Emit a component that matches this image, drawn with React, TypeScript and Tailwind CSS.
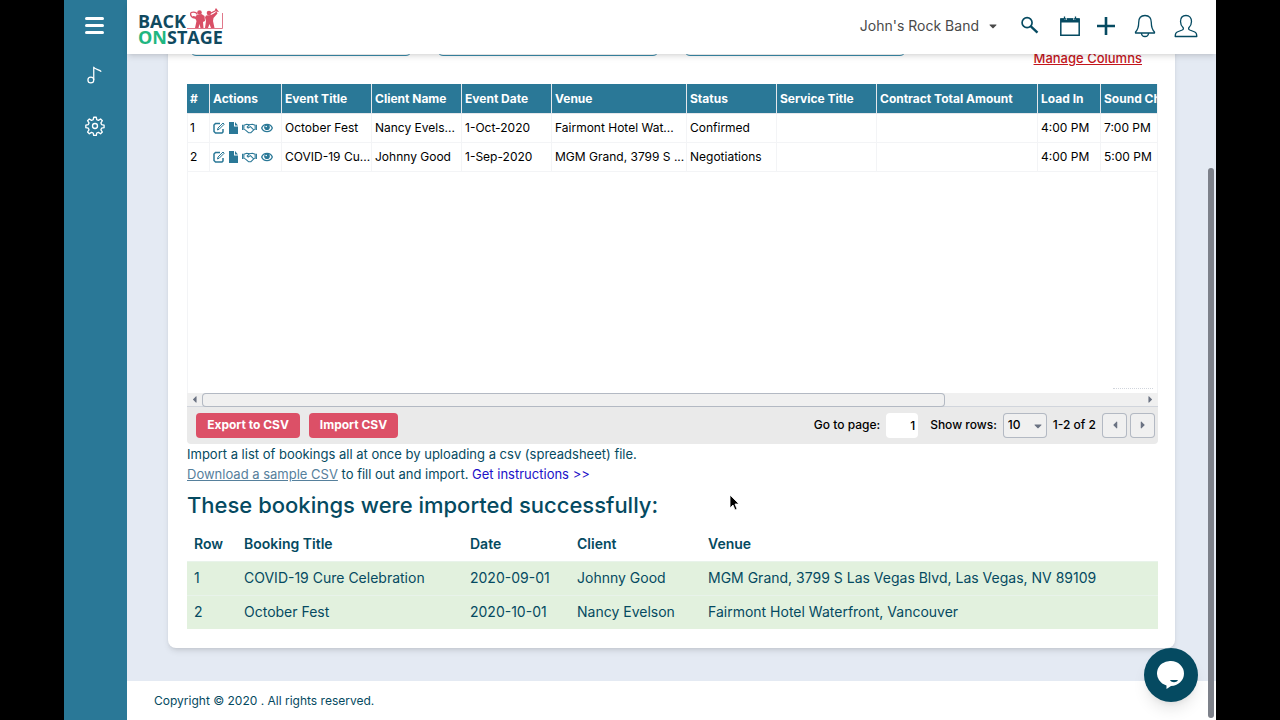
import type { ReactNode } from 'react'
import { FaCaretDown, FaCaretLeft, FaCaretRight } from 'react-icons/fa'

const columns = [
  { label: '#', width: 'w-[23px]' },
  { label: 'Actions', width: 'w-[72px]' },
  { label: 'Event Title', width: 'w-[90px]' },
  { label: 'Client Name', width: 'w-[90px]' },
  { label: 'Event Date', width: 'w-[90px]' },
  { label: 'Venue', width: 'w-[135px]' },
  { label: 'Status', width: 'w-[90px]' },
  { label: 'Service Title', width: 'w-[100px]' },
  { label: 'Contract Total Amount', width: 'w-[161px]' },
  { label: 'Load In', width: 'w-[63px]' },
  { label: 'Sound Check', width: 'w-[90px]' },
]

const bookings = [
  ['October Fest', 'Nancy Evels...', '1-Oct-2020', 'Fairmont Hotel Wat...', 'Confirmed', '', '', '4:00 PM', '7:00 PM'],
  ['COVID-19 Cu...', 'Johnny Good', '1-Sep-2020', 'MGM Grand, 3799 S ...', 'Negotiations', '', '', '4:00 PM', '5:00 PM'],
]

const imported = [
  ['1', 'COVID-19 Cure Celebration', '2020-09-01', 'Johnny Good', 'MGM Grand, 3799 S Las Vegas Blvd, Las Vegas, NV 89109'],
  ['2', 'October Fest', '2020-10-01', 'Nancy Evelson', 'Fairmont Hotel Waterfront, Vancouver'],
]

function Logo() {
  return (
    <svg width="90" height="48" viewBox="-1 -4 90 48" aria-label="Back On Stage">
      <g fontFamily="Open Sans, sans-serif" fontWeight="700" fontSize="18">
        <text x="0" y="22" fill="#10495f">BACK</text>
        <text x="0" y="38" fill="#1fb681">
          ON<tspan fill="#10495f">STAGE</tspan>
        </text>
      </g>
      <path d="M49 22.500H84.500V7" fill="none" stroke="#e0788a" />
      {/* sax player */}
      <g fill="#d94f66">
        <circle cx="61.500" cy="6.500" r="2.300" />
        <path d="M58.500 9l5-1 3 2 .5 5-2 1 .5 6h-3l-1-4-1 4h-3.500l1.500-7-1-2-3-1 .5-2 3 .5z" />
        <path d="M53 6.500c3-1 6 0 6 2M53 6.500c-1 2 0 4 2.500 5.500" fill="none" stroke="#d94f66" strokeWidth="1.300" />
      </g>
      {/* trumpet player */}
      <g fill="#d94f66">
        <circle cx="71" cy="7" r="2.300" />
        <path d="M68 9.500l5-.5 3-1.500 2.500-2 1 2-4 4.500-.5 3 1.500 7h-3.500l-1.500-4-1.500 4h-3l1-7-1-3.500z" />
        <path d="M73 7l6-3" fill="none" stroke="#d94f66" strokeWidth="1.300" />
        <path d="M78 2l3 4-3-.5-1-2z" />
      </g>
    </svg>
  )
}

function Line({ size, children, width = 1.5 }: { size: number; children: ReactNode; width?: number }) {
  return (
    <svg width={size} height={size} viewBox="0 0 24 24" fill="none" stroke="currentColor" strokeWidth={width} strokeLinejoin="round" aria-hidden="true">
      {children}
    </svg>
  )
}

function NoteIcon() {
  return (
    <Line size={20}>
      <circle cx="7" cy="18" r="3.500" />
      <path d="M10.500 18V2.500c1 3 7 3 9 5.500" />
    </Line>
  )
}

function GearIcon() {
  return (
    <Line size={20} width={1.6}>
      <path d="M10.500 1.500h3l.6 3 2 .8 2.600-1.700 2.100 2.100-1.700 2.600.8 2 3 .7v3l-3 .6-.8 2 1.700 2.600-2.100 2.100-2.600-1.700-2 .8-.6 3h-3l-.7-3-2-.8-2.600 1.700-2.100-2.100 1.700-2.600-.8-2-3-.6v-3l3-.7.8-2-1.700-2.600 2.100-2.100 2.600 1.700 2-.8z" />
      <circle cx="12" cy="12" r="3" />
    </Line>
  )
}

function SearchIcon() {
  return (
    <Line size={20} width={2}>
      <circle cx="8.500" cy="8" r="6" />
      <path d="M13 12.500l8 7.500" strokeWidth="2.800" />
    </Line>
  )
}

function CalendarIcon() {
  return (
    <svg width="20" height="20" viewBox="0 0 20 20" fill="none" stroke="currentColor" aria-hidden="true">
      <path d="M.8 3h18.400v16.200H.8z" strokeWidth="1.500" />
      <path d="M1 2.500h18v4H1z" fill="currentColor" stroke="none" />
      <path d="M5.500 0v4M14.500 0v4" stroke="#fff" strokeWidth="3" />
      <path d="M4.500 .5v2.500h2M15.500 .5v2.500h-2" strokeWidth="1.300" />
    </svg>
  )
}

function BellIcon() {
  return (
    <Line size={24} width={1.3}>
      <path d="M12 1.500c-4.500 0-6.300 3-6.300 7 0 5-.7 7-3.200 9.500v1h19v-1c-2.500-2.500-3.200-4.500-3.200-9.500 0-4-1.800-7-6.300-7z" />
      <path d="M8.500 19c0 2 1.500 3.500 3.500 3.500s3.500-1.500 3.500-3.500" />
    </Line>
  )
}

function UserIcon() {
  return (
    <Line size={24} width={1.3}>
      <path d="M12 1.500c-3.500 0-5.500 2.500-5.500 6 0 2.500 1 4.500 2.500 6 .8 1 .3 2-.8 2.500l-5 2c-1.500.7-2 2-2 4.500h21.600c0-2.500-.5-3.800-2-4.500l-5-2c-1.100-.5-1.600-1.500-.8-2.500 1.500-1.500 2.500-3.500 2.500-6 0-3.500-2-6-5.500-6z" />
    </Line>
  )
}

function RowActions() {
  return (
    <div className="flex items-center gap-1 text-[#2a7897]">
      <button aria-label="Edit">
        <svg width="12" height="12" viewBox="0 0 12 12" fill="none" stroke="currentColor" strokeWidth="1.500">
          <path d="M7 1.500H2.500L1 3v6.500L2.500 11H9l1-1V7" />
          <path d="M4.500 8l.5-2 5-5 1.200 1.200-5 5z" strokeWidth="1" />
        </svg>
      </button>
      <button aria-label="Document">
        <svg width="9" height="12" viewBox="0 0 9 12" fill="currentColor">
          <path d="M0 0h5v4.500h4V12H0zM6 0l3 3.500H6z" />
        </svg>
      </button>
      <button aria-label="Contract">
        <svg width="15" height="12" viewBox="0 0 16 12" fill="none" stroke="currentColor" strokeWidth="1.100">
          <path d="M.6 2.500v5.500M15.400 2.500v5.500M2 3l3-1 3 .5L11 2l3 1v4.500l-1.500.5-3 3H7L3.500 8 2 7.500V3z" />
          <path d="M8 2.500L5.500 5l1 1L9 4.500 12.500 8" />
        </svg>
      </button>
      <button aria-label="View">
        <svg width="12" height="10" viewBox="0 0 12 10" fill="none" stroke="currentColor">
          <path d="M.7 5C2.500.2 9.500.2 11.300 5 9.500 9.800 2.500 9.800 .7 5z" strokeWidth="1.300" />
          <circle cx="6" cy="4.300" r="2.800" fill="currentColor" stroke="none" />
          <circle cx="5.200" cy="3.500" r=".8" fill="#fff" stroke="none" />
        </svg>
      </button>
    </div>
  )
}

function BookingsGrid() {
  return (
    <section>
      <div className="relative min-h-[309px] overflow-hidden border-r border-gray-100 shadow-[inset_1px_0_0_#f3f4f6]">
        <table className="w-[1004px] table-fixed border-separate border-spacing-0 text-left text-xs">
          <thead>
            <tr className="h-[30px] bg-[#2a7897] text-white">
              {columns.map((col) => (
                <th key={col.label} className={`${col.width} border-r border-b border-gray-200 px-[3px] font-bold whitespace-nowrap`}>
                  {col.label}
                </th>
              ))}
            </tr>
          </thead>
          <tbody className="text-black">
            {bookings.map((row, i) => (
              <tr key={row[0]} className="h-[29px]">
                <td className="border-r border-b border-gray-100 px-[3px]">{i + 1}</td>
                <td className="border-r border-b border-gray-100 px-[3px]">
                  <RowActions />
                </td>
                {row.map((cell, j) => (
                  <td key={j} className="border-r border-b border-gray-100 px-[3px] whitespace-nowrap">
                    {cell}
                  </td>
                ))}
              </tr>
            ))}
          </tbody>
        </table>
        <div className="absolute right-1 bottom-1 w-10 border-b border-dotted border-gray-300" />
      </div>

      <div className="flex h-[14px] items-center justify-between border-b border-gray-300 bg-[#f0f0f0] px-[2px] text-[11px] text-gray-500">
        <FaCaretLeft />
        <div className="mx-[2px] flex-1">
          <div className="h-[14px] w-[79%] rounded-sm border border-gray-400/70 bg-[#f0f0f0]" />
        </div>
        <FaCaretRight />
      </div>

      <div className="flex h-[37px] items-center justify-between rounded-b-sm bg-[#eaeaea] pr-[3px] pb-px pl-[9px] text-xs">
        <div className="flex gap-[9px] text-white">
          <button className="h-[25px] w-[104px] rounded-sm bg-[#dc5067] font-bold">Export to CSV</button>
          <button className="h-[25px] w-[89px] rounded-sm bg-[#dc5067] font-bold">Import CSV</button>
        </div>
        <div className="flex items-center font-medium text-black">
          <label htmlFor="page">Go to page:</label>
          <input id="page" defaultValue="1" className="mr-3 ml-[6px] h-[25px] w-8 rounded-sm bg-white pr-[3px] text-right" />
          <label htmlFor="rows">Show rows:</label>
          <div className="relative mr-[6px] ml-[6px]">
            <select id="rows" className="h-[25px] w-11 appearance-none rounded-sm border border-gray-400/70 bg-[#f0f0f0] pl-1">
              <option>10</option>
            </select>
            <FaCaretDown className="pointer-events-none absolute top-[7px] right-[3px] text-gray-500" />
          </div>
          <span className="mr-[6px]">1-2 of 2</span>
          <div className="flex gap-[3px] text-gray-500">
            <button aria-label="Previous page" className="flex h-[25px] w-[25px] items-center justify-center rounded-sm border border-gray-400/70 bg-[#f0f0f0]">
              <FaCaretLeft />
            </button>
            <button aria-label="Next page" className="flex h-[25px] w-[25px] items-center justify-center rounded-sm border border-gray-400/70 bg-[#f0f0f0]">
              <FaCaretRight />
            </button>
          </div>
        </div>
      </div>
    </section>
  )
}

function ImportedTable() {
  return (
    <table className="w-full table-fixed text-left text-sm">
      <thead>
        <tr className="h-[34px]">
          <th className="w-[50px] px-[7px] font-semibold">Row</th>
          <th className="w-[226px] px-[7px] font-semibold">Booking Title</th>
          <th className="w-[107px] px-[7px] font-semibold">Date</th>
          <th className="w-[131px] px-[7px] font-semibold">Client</th>
          <th className="px-[7px] font-semibold">Venue</th>
        </tr>
      </thead>
      <tbody className="bg-[#e2f1de]">
        {imported.map((row) => (
          <tr key={row[0]} className="h-[34px] border-t border-[#e8f3ea]">
            {row.map((cell) => (
              <td key={cell} className="px-[7px] whitespace-nowrap">{cell}</td>
            ))}
          </tr>
        ))}
      </tbody>
    </table>
  )
}

export default function App() {
  return (
    <div className="min-h-screen bg-black px-16 font-['Inter',sans-serif] text-[#054a61]">
      <div className="relative flex min-h-screen overflow-hidden bg-[#e4eaf3]">
        <nav className="flex w-[63px] shrink-0 flex-col items-center bg-[#2a7897] pt-4 pr-[2px] text-white">
          <button aria-label="Menu" className="flex h-[19px] w-[19px] flex-col justify-between py-px">
            <span className="h-[3px] w-full rounded-full bg-white" />
            <span className="h-[3px] w-full rounded-full bg-white" />
            <span className="h-[3px] w-full rounded-full bg-white" />
          </button>
          <a href="#bookings" aria-label="Bookings" className="mt-[30px]">
            <NoteIcon />
          </a>
          <a href="#settings" aria-label="Settings" className="mt-[31px]">
            <GearIcon />
          </a>
        </nav>

        <div className="flex min-w-0 flex-1 flex-col">
          <header className="relative z-10 flex h-[54px] items-center justify-between bg-white pr-[18px] pb-[2px] pl-[10px] shadow-md">
            <a href="#home">
              <Logo />
            </a>
            <div className="flex items-center">
              <button className="flex items-center gap-2 text-sm text-[#4a4a4a]">
                John's Rock Band
                <FaCaretDown className="text-xs" />
              </button>
              <div className="ml-[21px] flex items-center">
                <button aria-label="Search"><SearchIcon /></button>
                <button aria-label="Calendar" className="ml-5"><CalendarIcon /></button>
                <button aria-label="Add" className="ml-[17px]">
                  <svg width="18" height="18" viewBox="0 0 18 18" stroke="currentColor" strokeWidth="2.600">
                    <path d="M9 0v18M0 9h18" />
                  </svg>
                </button>
                <button aria-label="Notifications" className="ml-[18px]"><BellIcon /></button>
                <button aria-label="Account" className="ml-[17px]"><UserIcon /></button>
              </div>
            </div>
          </header>

          <main className="flex-1 pr-[41px] pb-[33px] pl-[41px]">
            <div className="-mt-9 rounded-b-lg bg-white pr-[17px] pb-[19px] pl-[19px] shadow-md">
              <div className="flex h-[50px] justify-between">
                <div className="flex gap-[25px] pl-[3px]">
                  <input aria-label="Search bookings" className="h-[38px] w-[222px] rounded-md border border-[#3a8cab]" />
                  <input aria-label="From date" className="h-[38px] w-[222px] rounded-md border border-[#3a8cab]" />
                  <input aria-label="To date" className="h-[38px] w-[222px] rounded-md border border-[#3a8cab]" />
                </div>
                <a href="#columns" className="mr-4 self-end text-[13px] leading-5 font-medium text-[#c4161c] underline">Manage Columns</a>
              </div>
              <div className="mt-4">
                <BookingsGrid />
              </div>
              <p className="text-[13px] leading-5">
                Import a list of bookings all at once by uploading a csv (spreadsheet) file.
                <br />
                <a href="#sample" className="text-[#56809c] underline">Download a sample CSV</a> to fill out and import.{' '}
                <a href="#instructions" className="text-[#2010c8]">Get instructions &gt;&gt;</a>
              </p>
              <h2 className="text-[22px] leading-[43px] font-medium">These bookings were imported successfully:</h2>
              <ImportedTable />
            </div>
          </main>

          <footer className="bg-white px-[27px] py-[10px] text-xs leading-[19px]">
            Copyright © 2020 . All rights reserved.
          </footer>
        </div>

        <button aria-label="Open chat" className="absolute right-[18px] bottom-[18px] z-20 flex h-[54px] w-[54px] items-center justify-center rounded-full bg-[#054a61] shadow-lg">
          <svg width="28" height="30" viewBox="0 0 28 30">
            <path d="M14 1a13 12.500 0 0 1 0 25l-4.500 3V25.500A13 12.500 0 0 1 14 1z" fill="#fff" />
            <path d="M13 20h8c-1.500 3-6.500 3-8 0z" fill="#054a61" />
          </svg>
        </button>
        <div className="absolute right-[2px] bottom-[2px] z-20 h-[550px] w-[6px] rounded-full bg-[#7d818a]" />
        <svg className="absolute top-[494px] left-[665px] z-20" width="12" height="18" viewBox="0 0 12 18">
          <path d="M1 1v13l3-3 2 5 2-1-2-5h4z" fill="#000" stroke="#fff" strokeWidth=".8" />
        </svg>
      </div>
    </div>
  )
}
